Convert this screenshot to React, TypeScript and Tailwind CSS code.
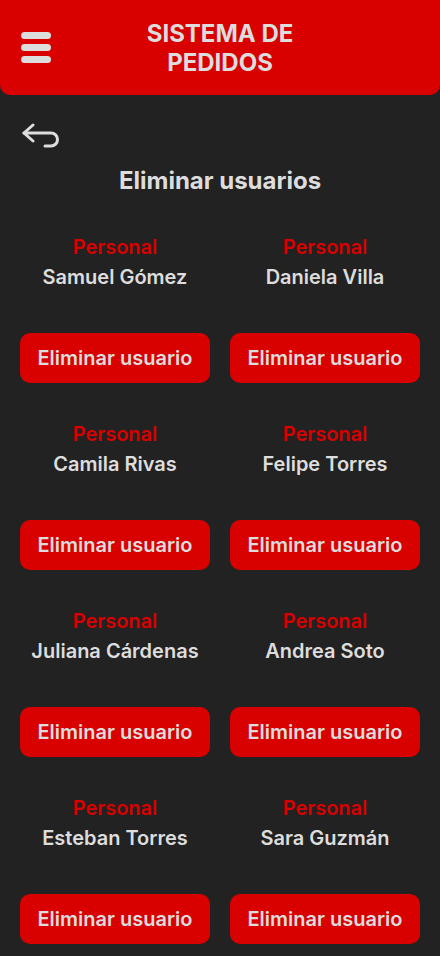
const users = [
  ['Samuel Gómez', 'Daniela Villa'],
  ['Camila Rivas', 'Felipe Torres'],
  ['Juliana Cárdenas', 'Andrea Soto'],
  ['Esteban Torres', 'Sara Guzmán'],
].flat();

function BackArrow() {
  return (
    <svg width="38" height="26" viewBox="0 0 38 26" fill="none" stroke="#dddddd" strokeWidth="3" strokeLinecap="round" strokeLinejoin="round">
      <path d="M11 2 L2 10 L11 18" />
      <path d="M2 10 H29 a6.5 6.5 0 0 1 0 13 H23" />
    </svg>
  );
}

export default function App() {
  return (
    <div className="min-h-screen bg-[#222222] font-['Inter',sans-serif] text-[#dddddd]">
      {/* Header */}
      <header className="h-[95px] bg-[#d90000] rounded-b-[10px] flex items-center px-[21px]">
        <div className="w-[30px] flex flex-col gap-[5px]">
          <span className="block h-[7px] rounded-full bg-[#dddddd]" />
          <span className="block h-[7px] rounded-full bg-[#dddddd]" />
          <span className="block h-[7px] rounded-full bg-[#dddddd]" />
        </div>
        <h1 className="flex-1 text-center text-[24px] leading-[29px] font-bold">
          SISTEMA DE
          <br />
          PEDIDOS
        </h1>
        <div className="w-[30px]" />
      </header>

      <div className="px-[22px] pt-[28px]">
        <BackArrow />
      </div>

      <h2 className="mt-[17px] text-center text-[24px] leading-[30px] font-bold">Eliminar usuarios</h2>

      {/* User grid */}
      <div className="mt-[36px] px-5 grid grid-cols-2 gap-x-5 gap-y-[36px]">
        {users.map((name) => (
          <div key={name} className="flex flex-col items-center">
            <p className="text-[20px] leading-[30px] font-semibold text-[#d90000]">Personal</p>
            <p className="text-[20px] leading-[30px] font-semibold">{name}</p>
            <button className="mt-[41px] w-full h-[50px] rounded-[10px] bg-[#d90000] text-[20px] font-semibold">
              Eliminar usuario
            </button>
          </div>
        ))}
      </div>
    </div>
  );
}
